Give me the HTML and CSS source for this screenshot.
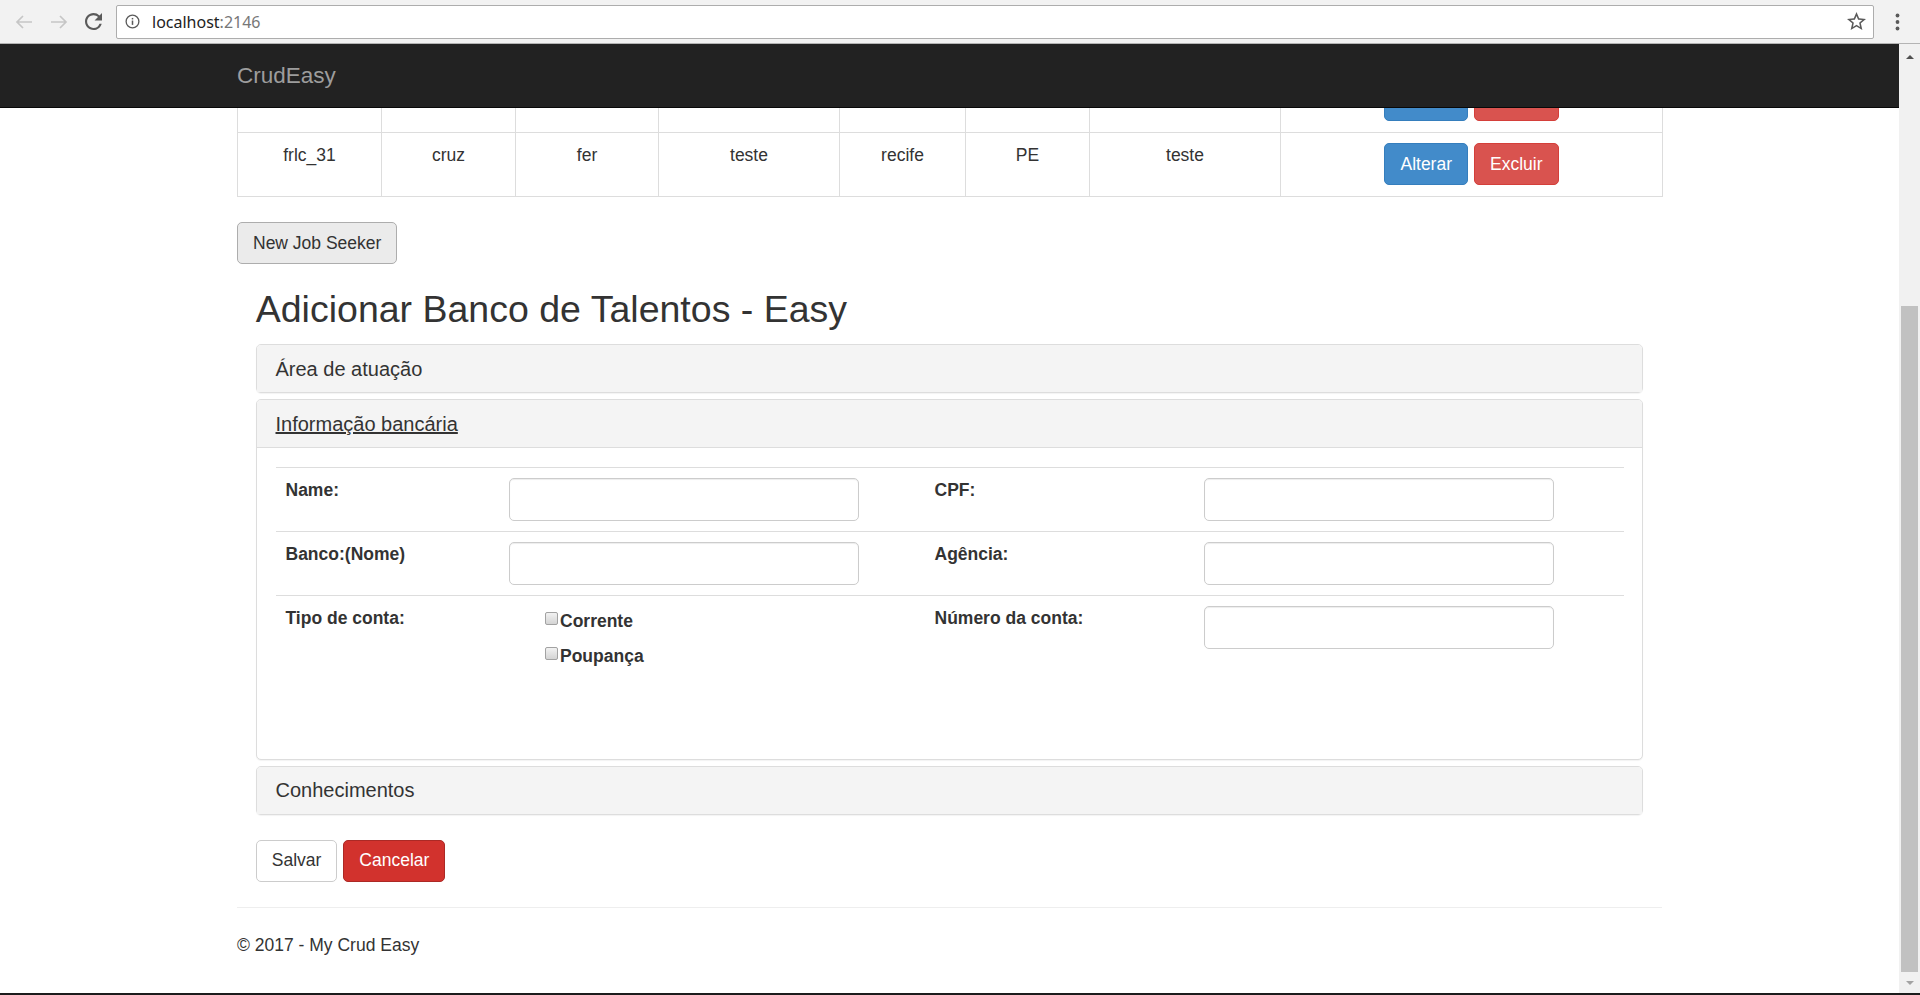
FILE: index.html
```html
<!DOCTYPE html>
<html lang="pt-BR">
<head>
<meta charset="utf-8">
<title>CrudEasy</title>
<link rel="stylesheet" href="styles.css">
</head>
<body>
<div class="chrome">
  <div class="nav-btn"><svg width="18" height="14" viewBox="0 0 18 14"><path d="M17 7H2M8 1L2 7l6 6" fill="none" stroke="#c6c6c6" stroke-width="1.7"/></svg></div>
  <div class="nav-btn"><svg width="18" height="14" viewBox="0 0 18 14"><path d="M1 7h15M10 1l6 6-6 6" fill="none" stroke="#c6c6c6" stroke-width="1.7"/></svg></div>
  <div class="nav-btn"><svg width="17" height="17" viewBox="4 4 16 16"><path d="M17.65 6.35A7.958 7.958 0 0 0 12 4c-4.42 0-7.99 3.58-7.99 8s3.570 8 7.99 8c3.73 0 6.84-2.55 7.730-6h-2.08A5.99 5.99 0 0 1 12 18c-3.31 0-6-2.69-6-6s2.69-6 6-6c1.66 0 3.14.69 4.22 1.78L13 11h7V4l-2.35 2.35z" fill="#5a5a5a"/></svg></div>
  <div class="omnibox">
    <svg class="info" width="15" height="15" viewBox="0 0 16 16"><circle cx="8" cy="8" r="6.8" fill="none" stroke="#5a5a5a" stroke-width="1.4"/><rect x="7.2" y="7" width="1.6" height="4.6" fill="#5a5a5a"/><rect x="7.2" y="4.2" width="1.6" height="1.6" fill="#5a5a5a"/></svg>
    <span class="url"><span class="host">localhost</span><span class="port">:2146</span></span>
    <svg class="star" width="19" height="19" viewBox="2 2 20 20"><path d="M22 9.24l-7.19-.62L12 2 9.19 8.63 2 9.24l5.46 4.73L5.82 21 12 17.27 18.18 21l-1.63-7.03L22 9.24zM12 15.4l-3.76 2.27 1-4.28-3.32-2.88 4.38-.38L12 6.1l1.71 4.04 4.38.38-3.32 2.88 1 4.28L12 15.4z" fill="#5a5a5a"/></svg>
  </div>
  <div class="menu"><svg width="5" height="18" viewBox="0 0 5 18"><circle cx="2.5" cy="2.5" r="1.9" fill="#5a5a5a"/><circle cx="2.5" cy="9" r="1.9" fill="#5a5a5a"/><circle cx="2.5" cy="15.5" r="1.9" fill="#5a5a5a"/></svg></div>
</div>

<div class="window">
  <div class="viewport">
    <main class="page">
      <table class="grid">
        <colgroup>
          <col class="c1"><col class="c2"><col class="c3"><col class="c4"><col class="c5"><col class="c6"><col class="c7"><col class="c8">
        </colgroup>
        <tbody>
          <tr>
            <td></td><td></td><td></td><td></td><td></td><td></td><td></td>
            <td><div class="row-actions"><button type="button" class="btn btn-primary">Alterar</button><button type="button" class="btn btn-danger">Excluir</button></div></td>
          </tr>
          <tr>
            <td>frlc_31</td><td>cruz</td><td>fer</td><td>teste</td><td>recife</td><td>PE</td><td>teste</td>
            <td><div class="row-actions"><button type="button" class="btn btn-primary">Alterar</button><button type="button" class="btn btn-danger">Excluir</button></div></td>
          </tr>
        </tbody>
      </table>

      <div class="toolbar"><button type="button" class="btn btn-pressed">New Job Seeker</button></div>

      <div class="form-wrap">
        <h2 class="form-title">Adicionar Banco de Talentos - Easy</h2>

        <div class="panel-group">
          <section class="panel">
            <div class="panel-heading"><h4 class="panel-title">Área de atuação</h4></div>
          </section>

          <section class="panel">
            <div class="panel-heading"><h4 class="panel-title"><a class="panel-link" href="#banco">Informação bancária</a></h4></div>
            <div class="panel-body" id="banco">
              <table class="fields">
                <colgroup><col class="f1"><col class="f2"><col class="f3"><col class="f4"></colgroup>
                <tbody>
                  <tr>
                    <td><label class="lbl">Name:</label></td>
                    <td><input class="form-control" type="text"></td>
                    <td><label class="lbl">CPF:</label></td>
                    <td><input class="form-control" type="text"></td>
                  </tr>
                  <tr>
                    <td><label class="lbl">Banco:(Nome)</label></td>
                    <td><input class="form-control" type="text"></td>
                    <td><label class="lbl">Agência:</label></td>
                    <td><input class="form-control" type="text"></td>
                  </tr>
                  <tr>
                    <td><label class="lbl">Tipo de conta:</label></td>
                    <td>
                      <div class="check-list">
                        <label class="check"><input type="checkbox">Corrente</label>
                        <label class="check"><input type="checkbox">Poupança</label>
                      </div>
                    </td>
                    <td><label class="lbl">Número da conta:</label></td>
                    <td><input class="form-control" type="text"></td>
                  </tr>
                </tbody>
              </table>
            </div>
          </section>

          <section class="panel">
            <div class="panel-heading"><h4 class="panel-title">Conhecimentos</h4></div>
          </section>
        </div>

        <div class="actions">
          <button type="button" class="btn btn-default">Salvar</button>
          <button type="button" class="btn btn-cancel">Cancelar</button>
        </div>
      </div>

      <hr class="sep">
      <footer class="footer"><p>© 2017 - My Crud Easy</p></footer>
    </main>

    <header class="navbar">
      <div class="navbar-inner"><a class="brand" href="#">CrudEasy</a></div>
    </header>
  </div>

  <div class="scrollbar">
    <div class="sb-btn"><span class="tri-up"></span></div>
    <div class="sb-track"><div class="sb-thumb"></div></div>
    <div class="sb-btn sb-down"><span class="tri-down"></span></div>
  </div>
</div>
<div class="taskbar"></div>
</body>
</html>
```

FILE: styles.css
```css
* { box-sizing: border-box; }
html, body { margin: 0; padding: 0; }
body {
  width: 1920px;
  height: 995px;
  overflow: hidden;
  font-family: "Liberation Sans", Arial, sans-serif;
  font-size: 17.5px;
  line-height: 25px;
  color: #333;
  background: #fff;
}

/* ---------- browser chrome ---------- */
.chrome {
  height: 44px;
  background: #f2f2f2;
  border-bottom: 1px solid #b4b4b4;
  display: flex;
  align-items: center;
  padding-left: 6px;
}
.nav-btn {
  width: 35px;
  height: 34px;
  display: flex;
  align-items: center;
  justify-content: center;
}
.omnibox {
  margin-left: 5px;
  flex: 1;
  height: 34px;
  background: #fff;
  border: 1px solid #adadad;
  border-radius: 2px;
  display: flex;
  align-items: center;
  padding: 0 7px 0 8px;
}
.info { flex: none; }
.url {
  margin-left: 12px;
  flex: 1;
  font-family: "Noto Sans", "Liberation Sans", sans-serif;
  font-size: 16px;
  line-height: 20px;
}
.host { color: #222; }
.port { color: #777; }
.star { flex: none; }
.menu {
  width: 46px;
  height: 34px;
  display: flex;
  align-items: center;
  justify-content: center;
}

/* ---------- window ---------- */
.window {
  display: flex;
  height: 949px;
}
.viewport {
  position: relative;
  flex: 1;
  overflow: hidden;
  background: #fff;
}
.taskbar {
  height: 2px;
  background: #1c1c1c;
}

/* scrollbar */
.scrollbar {
  width: 21px;
  background: #f1f1f1;
  display: flex;
  flex-direction: column;
}
.sb-btn {
  height: 26px;
  display: flex;
  align-items: center;
  justify-content: center;
}
.sb-down { height: 21px; }
.tri-up {
  width: 0; height: 0;
  border-left: 4.5px solid transparent;
  border-right: 4.5px solid transparent;
  border-bottom: 4.5px solid #505050;
}
.tri-down {
  width: 0; height: 0;
  border-left: 4.5px solid transparent;
  border-right: 4.5px solid transparent;
  border-top: 4.5px solid #a3a3a3;
}
.sb-track {
  flex: 1;
  padding: 0 2px;
}
.sb-thumb {
  margin-top: 236px;
  height: 666px;
  background: #c1c1c1;
}

/* ---------- navbar (fixed top) ---------- */
.navbar {
  position: absolute;
  top: 0;
  left: 0;
  right: 0;
  height: 64px;
  background: #222;
  border-bottom: 1px solid #080808;
}
.navbar-inner {
  width: 1425px;
  margin: 0 auto;
  height: 63px;
  display: flex;
  align-items: center;
}
.brand {
  font-size: 22.5px;
  line-height: 25px;
  color: #9d9d9d;
  text-decoration: none;
}

/* ---------- page ---------- */
.page {
  width: 1425px;
  margin: 0 auto;
  padding-top: 24px;
}

.grid {
  width: 100%;
  border-collapse: collapse;
  table-layout: fixed;
  margin-bottom: 25px;
  border: 1px solid #ddd;
}
.c1 { width: 144px; }
.c2 { width: 134px; }
.c3 { width: 143px; }
.c4 { width: 181px; }
.c5 { width: 126px; }
.c6 { width: 124px; }
.c7 { width: 191px; }
.c8 { width: 382px; }
.grid td {
  border: 1px solid #ddd;
  padding: 10px 10px 11px;
  text-align: center;
  vertical-align: top;
  line-height: 25px;
}
.row-actions {
  display: flex;
  justify-content: center;
  gap: 6px;
}

/* buttons */
.btn {
  display: inline-block;
  margin: 0;
  font-family: inherit;
  font-size: 17.5px;
  line-height: 25px;
  padding: 7.5px 15px;
  border: 1px solid transparent;
  border-radius: 5px;
  color: #fff;
  cursor: pointer;
  white-space: nowrap;
}
.btn-primary { background: #428bca; border-color: #357ebd; }
.btn-danger { background: #d9534f; border-color: #d43f3a; }
.btn-cancel { background: #d2322d; border-color: #ac2925; }
.btn-default { background: #fff; border-color: #ccc; color: #333; }
.btn-pressed { background: #ebebeb; border-color: #adadad; color: #333; padding: 7.5px 15px; }

.toolbar { display: flex; }

/* form */
.form-wrap { padding: 0 18.75px; }
.form-title {
  font-size: 37.5px;
  font-weight: normal;
  line-height: 41.25px;
  margin: 25px 0 14px;
  color: #333;
}
.panel-group { margin-bottom: 25px; }
.panel {
  border: 1px solid #ddd;
  border-radius: 5px;
  background: #fff;
  box-shadow: 0 1px 1px rgba(0,0,0,.05);
}
.panel + .panel { margin-top: 6px; }
.panel-heading {
  background: #f4f4f4;
  padding: 12.5px 18.75px;
  border-radius: 4px 4px 0 0;
}
.panel-title {
  margin: 0;
  font-size: 20px;
  line-height: 22px;
  font-weight: normal;
  color: #333;
}
.panel-link {
  color: #333;
  text-decoration: underline;
}
.panel-body {
  border-top: 1px solid #ddd;
  padding: 18.75px;
}

.fields {
  width: 100%;
  border-collapse: collapse;
  table-layout: fixed;
  margin-bottom: 25px;
}
.f1 { width: 223px; }
.f2 { width: 426px; }
.f3 { width: 269px; }
.f4 { width: 430px; }
.fields td {
  border-top: 1px solid #ddd;
  padding: 10px;
  vertical-align: top;
  text-align: left;
}
.lbl {
  font-weight: bold;
  display: inline-block;
}
.form-control {
  display: block;
  width: 350px;
  height: 43px;
  padding: 7.5px 15px;
  font-family: inherit;
  font-size: 17.5px;
  color: #555;
  background: #fff;
  border: 1px solid #ccc;
  border-radius: 5px;
  box-shadow: inset 0 1px 1px rgba(0,0,0,.075);
}
.check-list {
  padding: 3px 0 36px 36.5px;
}
.check {
  display: flex;
  align-items: flex-start;
  font-weight: bold;
  line-height: 25px;
  margin-bottom: 10px;
}
.check:last-child { margin-bottom: 0; }
.check input {
  appearance: none;
  -webkit-appearance: none;
  flex: none;
  width: 13px;
  height: 13px;
  margin: 3px 2px 0 0;
  border: 1px solid #a2a2a2;
  border-radius: 2px;
  background: linear-gradient(#f2f2f2, #d4d4d4);
}

.actions {
  display: flex;
  gap: 6px;
}

.sep {
  margin: 25px 0;
  border: 0;
  border-top: 1px solid #eee;
}
.footer p { margin: 0 0 12.5px; }
```
